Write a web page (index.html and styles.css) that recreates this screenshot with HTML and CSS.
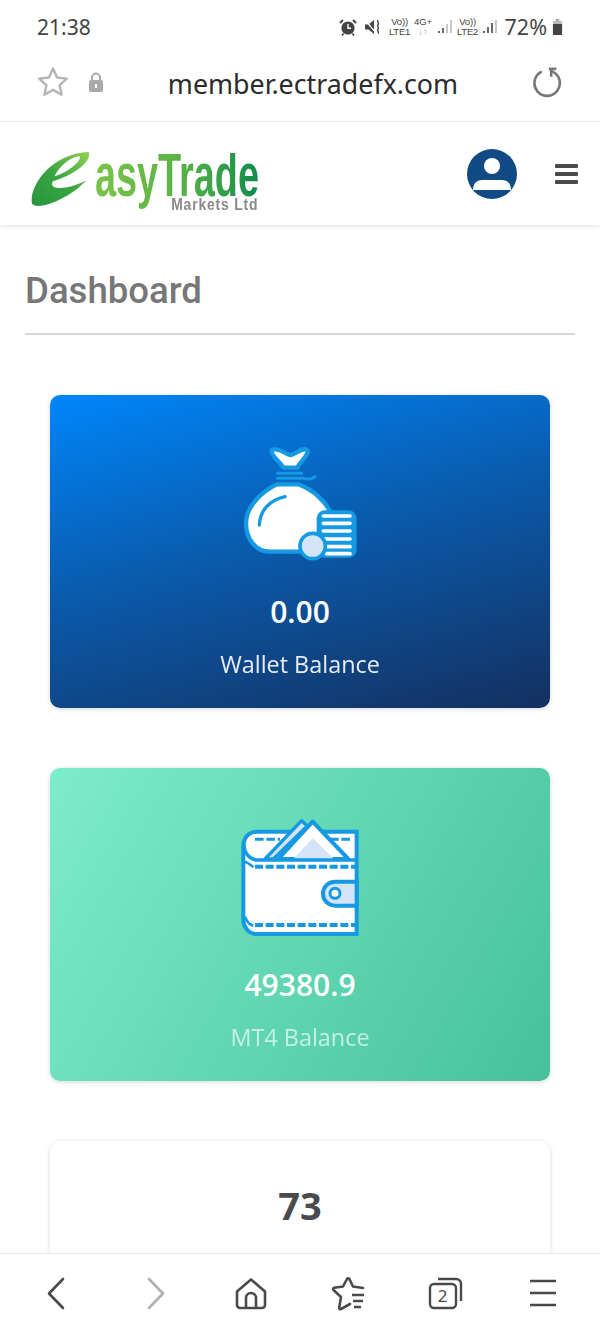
FILE: index.html
```html
<!DOCTYPE html>
<html lang="en">
<head>
    <meta charset="UTF-8">
    <title>Dashboard</title>
    <link rel="stylesheet" href="styles.css">
</head>
<body>
    <div class="phone">
        <!-- status bar -->
        <div class="status-bar">
            <span class="clock">21:38</span>
            <div class="status-icons">
                <svg class="ico-alarm" width="18" height="18" viewBox="0 0 18 18">
                    <circle cx="9" cy="10" r="6.600" fill="#444"/>
                    <path d="M9 6v4.200h3" fill="none" stroke="#fff" stroke-width="1.400"/>
                    <path d="M1 5l3-3M17 5l-3-3" stroke="#444" stroke-width="2"/>
                    <path d="M4.500 15.500l-1.500 2M13.500 15.500l1.500 2" stroke="#444" stroke-width="1.600"/>
                </svg>
                <svg class="ico-mute" width="18" height="18" viewBox="0 0 18 18">
                    <path d="M1 6.500h3.500L10 2v14L4.500 11.500H1z" fill="#444"/>
                    <path d="M1.500 2.500L12 15" stroke="#fff" stroke-width="1.200"/>
                    <path d="M14 2c-1.500 1.500 1.500 3 0 4.500s1.500 3 0 4.500 1.500 3 0 4.500" fill="none" stroke="#444" stroke-width="1.500"/>
                </svg>
                <span class="net net-lte"><span>Vo))</span><span>LTE1</span></span>
                <span class="net net-4g"><span>4G+</span><span class="arrows">↓↑</span></span>
                <svg class="bars" width="15" height="16" viewBox="0 0 15 16">
                    <path d="M1 14v-2M5 14V9" stroke="#444" stroke-width="1.600"/>
                    <path d="M9 14V5M13 14V1" stroke="#bbb" stroke-width="1.600"/>
                </svg>
                <span class="net net-lte"><span>Vo))</span><span>LTE2</span></span>
                <svg class="bars" width="14" height="16" viewBox="0 0 14 16">
                    <path d="M1 14v-2M5 14V8M9 14V4" stroke="#444" stroke-width="1.600"/>
                    <path d="M13 14V1" stroke="#bbb" stroke-width="1.600"/>
                </svg>
                <span class="battery-text">72%</span>
                <svg width="11" height="16" viewBox="0 0 12 16" preserveAspectRatio="none">
                    <path d="M4 0h4v2H4z" fill="#aaa"/>
                    <path d="M1 2h10v3H1z" fill="#bbb"/>
                    <path d="M1 5h10v11H1z" fill="#444"/>
                </svg>
            </div>
        </div>

        <!-- browser url bar -->
        <div class="url-bar">
            <svg class="ico-star" width="34" height="34" viewBox="0 0 34 34">
                <path d="M17 3.500l4.100 9 9.700 1.100-7.200 6.600 2 9.600-8.600-4.900-8.600 4.900 2-9.600-7.200-6.600 9.700-1.100z" fill="none" stroke="#b5b5b5" stroke-width="2.400" stroke-linejoin="round"/>
            </svg>
            <svg class="ico-lock" width="16" height="22" viewBox="0 0 16 22">
                <path d="M4 10V6.500a4 4 0 0 1 8 0V10" fill="none" stroke="#aaa" stroke-width="2"/>
                <rect x="1" y="9" width="14" height="12" rx="2" fill="#aaa"/>
                <rect x="7" y="13" width="2" height="4" fill="#fff"/>
            </svg>
            <span class="url">member.ectradefx.com</span>
            <svg class="ico-reload" width="32" height="32" viewBox="0 0 34 34">
                <path d="M11.500 6.500A13.500 13.500 0 1 0 24 6" fill="none" stroke="#777" stroke-width="2.800" stroke-linecap="round"/>
                <path d="M20 3h8M22.500 3v8.500" fill="none" stroke="#777" stroke-width="2.800"/>
            </svg>
        </div>

        <!-- site header -->
        <header class="site-header">
            <div class="logo">
                <svg class="logo-e" width="80" height="62" viewBox="0 0 240 186">
                    <defs>
                        <linearGradient id="logoGrad" x1="0" y1="1" x2="1" y2="0">
                            <stop offset="0" stop-color="#27953c"/>
                            <stop offset="0.5" stop-color="#3aa543"/>
                            <stop offset="1" stop-color="#93d053"/>
                        </linearGradient>
                    </defs>
                    <path fill-rule="evenodd" d="M15 170C5 120 70 20 185 15c10 25-35 65-107 88-16 22 32 32 100-3-38 45-138 95-163 70zM82 88c18-33 48-58 76-60 7 12-33 47-76 60z" fill="url(#logoGrad)"/>
                </svg>
                <div class="logo-words">
                    <span class="logo-name">asyTrade</span>
                    <span class="logo-sub">Markets Ltd</span>
                </div>
            </div>
            <div class="header-actions">
                <svg width="50" height="50" viewBox="0 0 50 50">
                    <circle cx="25" cy="25" r="25" fill="#114a85"/>
                    <circle cx="25" cy="17" r="8" fill="#fff"/>
                    <path d="M6 41c0-8 5-10 10-10h18c5 0 10 2 10 10z" fill="#fff"/>
                </svg>
                <div class="burger"><i></i><i></i><i></i></div>
            </div>
        </header>

        <!-- page content -->
        <main class="content">
            <h1 class="page-title">Dashboard</h1>

            <div class="card card-blue">
                <svg class="card-ico" width="160" height="135" viewBox="0 0 480 405">
                    <path d="M155 45c20-10 45 15 55 15 15 0 35-25 52-15 6 15-22 35-30 53h-42c-10-18-40-38-35-53z" fill="#fff" stroke="#1499e2" stroke-width="13" stroke-linejoin="round"/>
                    <path d="M172 115h73M172 130h78c15 5 30 0 35-5" fill="none" stroke="#1499e2" stroke-width="9" stroke-linecap="round"/>
                    <path d="M170 148h65c45 17 85 52 100 92l-15 110H150c-45 0-72-40-72-85 0-50 47-95 92-117z" fill="#fff" stroke="#1499e2" stroke-width="13" stroke-linejoin="round"/>
                    <path d="M118 270c2-45 32-75 77-85" fill="none" stroke="#1499e2" stroke-width="10" stroke-linecap="round"/>
                    <rect x="290" y="226" width="120" height="142" rx="24" fill="#1499e2"/>
                    <path d="M310 243h80M310 265h80M310 288h80M310 312h80M320 335h70M320 356h70" stroke="#fff" stroke-width="11" stroke-linecap="round"/>
                    <circle cx="278" cy="333" r="38" fill="#d3e4f8" stroke="#1499e2" stroke-width="11"/>
                </svg>
                <div class="card-value">0.00</div>
                <div class="card-label">Wallet Balance</div>
            </div>

            <div class="card card-green">
                <svg class="card-ico" width="160" height="135" viewBox="0 -6 480 405">
                    <path d="M110 65h300v307H110c-25 0-40-22-40-42V110c0-25 15-45 40-45z" fill="#fff" stroke="#1499e2" stroke-width="12"/>
                    <path d="M72 105c0 25 18 43 38 45h300" fill="none" stroke="#1499e2" stroke-width="11"/>
                    <path d="M105 88h75M330 88h65" stroke="#1499e2" stroke-width="9" stroke-dasharray="26 8"/>
                    <path d="M135 147L245 32l17 16-102 99z" fill="#d3e4f8" stroke="#1499e2" stroke-width="10" stroke-linejoin="round"/>
                    <path d="M175 147L278 35l107 112z" fill="#fff" stroke="#1499e2" stroke-width="12" stroke-linejoin="round"/>
                    <path d="M222 145l56-60 62 60z" fill="#d3e4f8"/>
                    <path d="M105 170h300M105 345h300" stroke="#1499e2" stroke-width="12" stroke-dasharray="24 8"/>
                    <path d="M75 155c10 5 20 10 25 17M75 320c5 15 15 25 25 27" fill="none" stroke="#1499e2" stroke-width="8"/>
                    <path d="M410 215h-65a35 35 0 0 0 0 72h65z" fill="#d3e4f8" stroke="#1499e2" stroke-width="12"/>
                    <circle cx="345" cy="250" r="15" fill="#fff" stroke="#1499e2" stroke-width="9"/>
                </svg>
                <div class="card-value">49380.9</div>
                <div class="card-label">MT4 Balance</div>
            </div>

            <div class="card card-white">
                <div class="card-value">73</div>
            </div>
        </main>

        <!-- browser bottom toolbar -->
        <nav class="bottom-bar">
            <svg width="40" height="40" viewBox="0 0 40 40"><path d="M27 5L13 19.500 27 34" fill="none" stroke="#4a4a4a" stroke-width="2.600" stroke-linecap="round" stroke-linejoin="round"/></svg>
            <svg width="40" height="40" viewBox="0 0 40 40"><path d="M16 5l14 14.500L16 34" fill="none" stroke="#b0b0b0" stroke-width="2.600" stroke-linecap="round" stroke-linejoin="round"/></svg>
            <svg width="40" height="40" viewBox="0 0 40 40">
                <path d="M6 17.500L20 5.500l14 12V31a3 3 0 0 1-3 3H9a3 3 0 0 1-3-3z" fill="none" stroke="#4a4a4a" stroke-width="2.600" stroke-linejoin="round"/>
                <path d="M15 34V24a5 5 0 0 1 10 0v10" fill="none" stroke="#4a4a4a" stroke-width="2.600"/>
            </svg>
            <svg width="40" height="40" viewBox="0 0 40 40">
                <path d="M22 30l-9 5c-1 .5-2 0-1.800-1.200L13 23 5.500 16c-.8-1-.3-2 .8-2.200L15 12.500 19 5c.6-1 1.800-1 2.400 0L25 12.500 35 14" fill="none" stroke="#4a4a4a" stroke-width="2.600" stroke-linecap="round" stroke-linejoin="round"/>
                <path d="M24 21h12M25 27h10M26 33h7" stroke="#4a4a4a" stroke-width="2.400"/>
            </svg>
            <div class="tabs-btn">
                <svg width="40" height="40" viewBox="0 0 40 40">
                    <rect x="4" y="10" width="26" height="24" rx="4" fill="none" stroke="#4a4a4a" stroke-width="2.400"/>
                    <path d="M12 5h18a5 5 0 0 1 5 5v17" fill="none" stroke="#4a4a4a" stroke-width="2.400"/>
                </svg>
                <span class="tabs-count">2</span>
            </div>
            <svg width="40" height="40" viewBox="0 0 40 40"><path d="M7 7h26M7 19h26M7 31h26" stroke="#4a4a4a" stroke-width="2.600"/></svg>
        </nav>
    </div>
</body>
</html>
```

FILE: styles.css
```css
* {
    box-sizing: border-box;
}

html, body {
    margin: 0;
    padding: 0;
}

.phone {
    width: 600px;
    height: 1333px;
    display: flex;
    flex-direction: column;
    overflow: hidden;
    background: #fff;
    font-family: "Open Sans", "Liberation Sans", sans-serif;
}

/* status bar */
.status-bar {
    height: 46px;
    flex: none;
    display: flex;
    justify-content: space-between;
    align-items: center;
    padding: 7px 37px 0 37px;
    color: #444;
}

.clock {
    font-family: "Noto Sans", sans-serif;
    font-size: 21px;
}

.status-icons {
    display: flex;
    align-items: center;
    gap: 4px;
}

.ico-alarm,
.ico-mute {
    margin-right: 3px;
}

.net {
    display: flex;
    flex-direction: column;
    align-items: center;
    font-family: "Liberation Sans", sans-serif;
    font-size: 9.500px;
    line-height: 10px;
}

.net-lte {
    width: 22px;
    letter-spacing: -0.2px;
}

.net-4g {
    width: 17px;
    margin-right: 2px;
}

.net-4g .arrows {
    color: #aaa;
}

.battery-text {
    font-family: "Noto Sans", sans-serif;
    font-size: 21.500px;
    margin: 0 1px 0 4px;
}

/* url bar */
.url-bar {
    height: 76px;
    flex: none;
    display: flex;
    align-items: center;
    padding: 0 38px 0 36px;
    border-bottom: 1px solid #f0f0f0;
}

.ico-star,
.ico-lock,
.ico-reload {
    margin-bottom: 4px;
}

.ico-lock {
    margin-left: 18px;
}

.url {
    flex: 1;
    text-align: center;
    font-family: "Noto Sans", sans-serif;
    font-size: 26.800px;
    color: #2b2b2b;
    margin-right: 8px;
}

/* site header */
.site-header {
    height: 103px;
    flex: none;
    display: flex;
    justify-content: space-between;
    align-items: flex-start;
    padding: 25px 22px 0 27px;
    box-shadow: 0 1px 4px rgba(0, 0, 0, 0.14);
    position: relative;
}

.logo {
    display: flex;
    align-items: flex-start;
}

.logo-e {
    flex: none;
    margin-right: -12px;
}

.logo-words {
    width: 163px;
    margin-top: 6px;
    display: flex;
    flex-direction: column;
}

.logo-name {
    align-self: flex-start;
    white-space: nowrap;
    font-family: "Liberation Sans", sans-serif;
    font-weight: bold;
    font-size: 61px;
    line-height: 44px;
    padding-bottom: 18px;
    margin-bottom: -18px;
    transform: scaleX(0.62);
    transform-origin: left;
    background: linear-gradient(90deg, #79c348 0%, #5fb547 45%, #3fa649 70%, #0f8a4a 100%);
    -webkit-background-clip: text;
    background-clip: text;
    color: transparent;
}

.logo-sub {
    white-space: nowrap;
    align-self: flex-end;
    font-family: "Liberation Sans", sans-serif;
    font-weight: bold;
    font-size: 17px;
    line-height: 14px;
    letter-spacing: 1px;
    color: #8a8a8a;
    margin-top: 1px;
    transform: scaleX(0.82);
    transform-origin: right;
}

.header-actions {
    display: flex;
    align-items: center;
    gap: 38px;
    height: 50px;
    margin-top: 2px;
}

.burger {
    display: flex;
    flex-direction: column;
    gap: 4px;
}

.burger i {
    display: block;
    width: 23px;
    height: 4px;
    border-radius: 1px;
    background: #4a4a4a;
}

/* content */
.content {
    flex: 1;
    min-height: 0;
    overflow: hidden;
    padding: 0 25px;
}

.page-title {
    margin: 0 0 60px;
    height: 110px;
    padding-top: 42px;
    font-family: Roboto, sans-serif;
    font-weight: 500;
    font-size: 36.600px;
    line-height: 48px;
    color: #777;
    border-bottom: 2px solid #d6d6d6;
}

.card {
    margin: 0 25px 60px;
    height: 313px;
    border-radius: 10px;
    display: flex;
    flex-direction: column;
    align-items: center;
    padding-top: 40px;
    color: #fff;
    box-shadow: 0 1px 5px rgba(0, 0, 0, 0.16);
}

.card-blue {
    background: linear-gradient(165deg, #0086fb 0%, #0a5cae 45%, #14305f 100%);
}

.card-green {
    background: linear-gradient(120deg, #7decca 0%, #46c19c 100%);
}

.card-white {
    background: #fff;
    padding-top: 36px;
    color: #494b50;
}

.card-ico {
    display: block;
    flex: none;
}

.card-value {
    font-weight: 600;
    font-size: 30px;
    line-height: 40px;
    margin-top: 22px;
}

.card-white .card-value {
    font-weight: 700;
    font-size: 38px;
    margin-top: 8px;
}

.card-label {
    font-size: 23.400px;
    line-height: 30px;
    margin-top: 17px;
    opacity: 0.9;
}

.card-green .card-label {
    opacity: 0.65;
}

/* bottom toolbar */
.bottom-bar {
    height: 80px;
    flex: none;
    display: flex;
    justify-content: space-between;
    align-items: center;
    padding: 0 37px 0 36px;
    border-top: 1px solid #e8e8e8;
    background: #fff;
    position: relative;
}

.tabs-btn {
    position: relative;
    width: 40px;
    height: 40px;
}

.tabs-count {
    position: absolute;
    left: 4px;
    top: 12px;
    width: 26px;
    text-align: center;
    font-family: "Noto Sans", sans-serif;
    font-size: 17px;
    line-height: 20px;
    color: #4a4a4a;
}
```
